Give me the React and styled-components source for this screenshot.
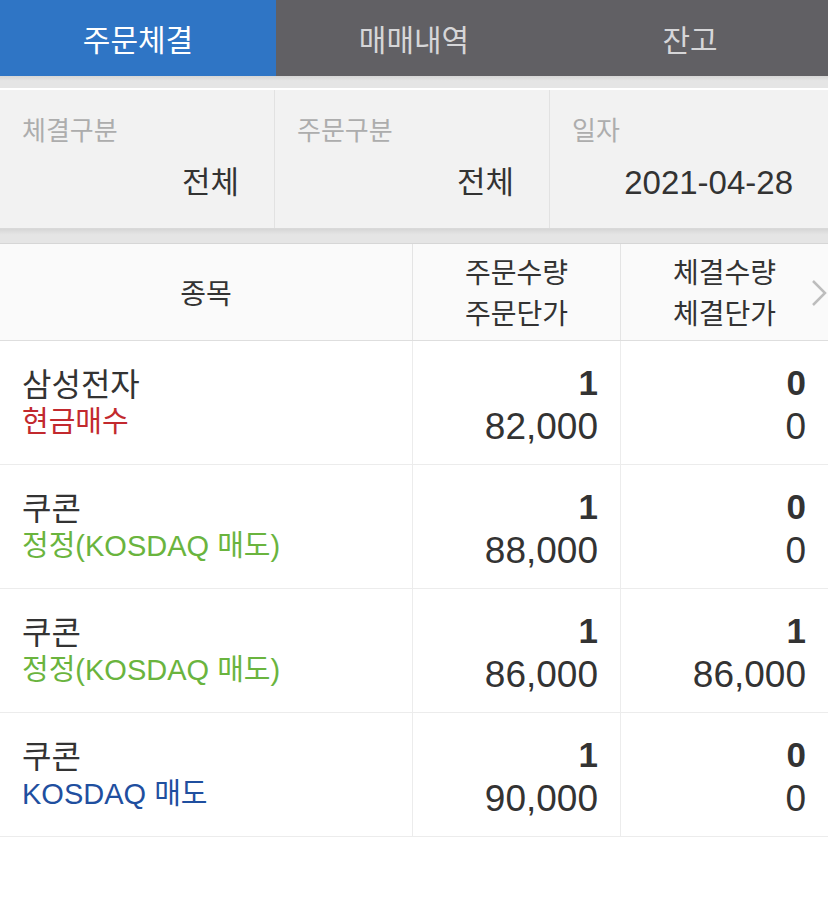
import React from "react";
import styled, { createGlobalStyle } from "styled-components";

const GlobalStyle = createGlobalStyle`
  body {
    margin: 0;
    background: #ffffff;
    font-family: "Liberation Sans", "Noto Sans CJK KR", sans-serif;
    color: #333333;
  }
`;

const Page = styled.div`
  width: 828px;
`;

const TabBar = styled.div`
  display: grid;
  grid-template-columns: 276px 1fr 276px;
  height: 76px;
  background: #616064;
`;

const Tab = styled.div`
  display: flex;
  align-items: center;
  justify-content: center;
  font-family: "Noto Sans CJK KR", sans-serif;
  font-size: 30px;
  color: ${(p) => (p.active ? "#ffffff" : "#d6d6d8")};
  background: ${(p) => (p.active ? "#2f75c5" : "transparent")};
`;

const Band = styled.div`
  height: ${(p) => p.h}px;
  background: linear-gradient(#d6d6d6, #e5e5e5 40%);
  border-bottom: ${(p) => (p.light ? "2px solid #ffffff" : "1px solid #d6d6d6")};
`;

const FilterPanel = styled.div`
  display: grid;
  grid-template-columns: 275px 275px 1fr;
  height: 138px;
  background: #f2f2f2;
  border-bottom: 1px solid #d9d9d9;
`;

const FilterCell = styled.div`
  display: flex;
  flex-direction: column;
  padding: 22px 35px 0 22px;
  border-right: ${(p) => (p.last ? "none" : "1px solid #e2e2e2")};
`;

const FilterLabel = styled.div`
  font-family: "Noto Sans CJK KR", sans-serif;
  font-size: 26px;
  line-height: 34px;
  color: #adadad;
`;

const FilterValue = styled.div`
  margin-top: 16px;
  text-align: right;
  font-family: "Liberation Sans", "Noto Sans CJK KR", sans-serif;
  font-size: ${(p) => (p.date ? "33px" : "31px")};
  line-height: 42px;
  color: #333333;
`;

const Grid = styled.div`
  display: grid;
  grid-template-columns: 413px 208px 1fr;
`;

const HeaderRow = styled(Grid)`
  height: 96px;
  background: #fafafa;
  border-bottom: 1px solid #dedede;
  position: relative;
`;

const HeaderCell = styled.div`
  display: flex;
  flex-direction: column;
  align-items: center;
  justify-content: center;
  border-right: ${(p) => (p.last ? "none" : "1px solid #e4e4e4")};
`;

const HeaderLine = styled.div`
  font-family: "Noto Sans CJK KR", sans-serif;
  font-size: 28px;
  line-height: 41px;
  color: #333333;
`;

const Arrow = styled.svg`
  position: absolute;
  right: 0;
  top: 35px;
  width: 18px;
  height: 28px;
`;

const Row = styled(Grid)`
  height: 123px;
  border-bottom: 1px solid #ececec;
`;

const NameCell = styled.div`
  display: flex;
  flex-direction: column;
  justify-content: center;
  padding: 0 0 2px 22px;
  border-right: 1px solid #ececec;
`;

const Name = styled.div`
  font-family: "Noto Sans CJK KR", sans-serif;
  font-size: 32px;
  line-height: 40px;
  color: #333333;
`;

const Sub = styled.div`
  font-family: "Liberation Sans", "Noto Sans CJK KR", sans-serif;
  font-size: 29px;
  line-height: 40px;
  color: ${(p) => p.color};
`;

const NumCell = styled.div`
  display: flex;
  flex-direction: column;
  align-items: flex-end;
  justify-content: center;
  padding: 4px 22px 0 0;
  border-right: ${(p) => (p.last ? "none" : "1px solid #ececec")};
`;

const Qty = styled.div`
  font-family: "Liberation Sans", sans-serif;
  font-weight: bold;
  font-size: 35px;
  line-height: 44px;
  color: #333333;
`;

const Price = styled.div`
  font-family: "Liberation Sans", sans-serif;
  font-size: 37px;
  line-height: 44px;
  color: #333333;
`;

const tone = {
  buy: "#c2292e",
  modify: "#6ab43e",
  sell: "#1f4f9f",
};

const orders = [
  { name: "삼성전자", type: "현금매수", kind: "buy", qty: "1", price: "82,000", fillQty: "0", fillPrice: "0" },
  { name: "쿠콘", type: "정정(KOSDAQ 매도)", kind: "modify", qty: "1", price: "88,000", fillQty: "0", fillPrice: "0" },
  { name: "쿠콘", type: "정정(KOSDAQ 매도)", kind: "modify", qty: "1", price: "86,000", fillQty: "1", fillPrice: "86,000" },
  { name: "쿠콘", type: "KOSDAQ 매도", kind: "sell", qty: "1", price: "90,000", fillQty: "0", fillPrice: "0" },
];

const App = () => {
  return (
    <Page>
      <GlobalStyle />
      <TabBar>
        <Tab active>주문체결</Tab>
        <Tab>매매내역</Tab>
        <Tab>잔고</Tab>
      </TabBar>
      <Band h={12} light />

      <FilterPanel>
        <FilterCell>
          <FilterLabel>체결구분</FilterLabel>
          <FilterValue>전체</FilterValue>
        </FilterCell>
        <FilterCell>
          <FilterLabel>주문구분</FilterLabel>
          <FilterValue>전체</FilterValue>
        </FilterCell>
        <FilterCell last>
          <FilterLabel>일자</FilterLabel>
          <FilterValue date>2021-04-28</FilterValue>
        </FilterCell>
      </FilterPanel>
      <Band h={14} />

      <HeaderRow>
        <HeaderCell>
          <HeaderLine>종목</HeaderLine>
        </HeaderCell>
        <HeaderCell>
          <HeaderLine>주문수량</HeaderLine>
          <HeaderLine>주문단가</HeaderLine>
        </HeaderCell>
        <HeaderCell last>
          <HeaderLine>체결수량</HeaderLine>
          <HeaderLine>체결단가</HeaderLine>
        </HeaderCell>
        <Arrow viewBox="0 0 18 28">
          <path d="M3 2 L15 14 L3 26" fill="none" stroke="#bdbdbd" strokeWidth="2.5" />
        </Arrow>
      </HeaderRow>

      {orders.map((o, i) => (
        <Row key={i}>
          <NameCell>
            <Name>{o.name}</Name>
            <Sub color={tone[o.kind]}>{o.type}</Sub>
          </NameCell>
          <NumCell>
            <Qty>{o.qty}</Qty>
            <Price>{o.price}</Price>
          </NumCell>
          <NumCell last>
            <Qty>{o.fillQty}</Qty>
            <Price>{o.fillPrice}</Price>
          </NumCell>
        </Row>
      ))}
    </Page>
  );
};

export default App;
